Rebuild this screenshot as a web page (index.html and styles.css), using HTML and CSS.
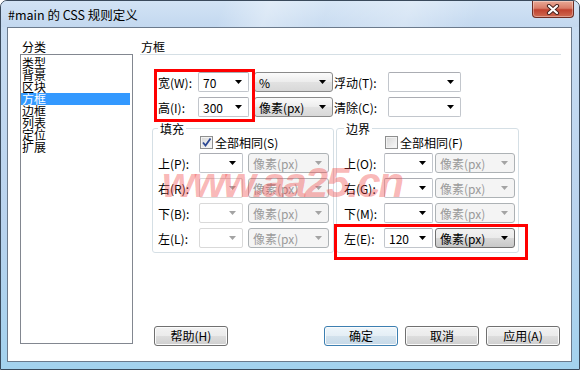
FILE: index.html
```html
<!DOCTYPE html>
<html lang="zh-CN">
<head>
    <meta charset="UTF-8">
    <title>#main 的 CSS 规则定义</title>
    <link rel="stylesheet" href="styles.css">
</head>
<body>
    <div class="window">
        <div class="titlebar">
            <span class="title">#main 的 CSS 规则定义</span>
            <span class="close">
                <svg width="16" height="11" viewBox="0 0 16 11">
                    <path d="M4 2 L12 9 M12 2 L4 9" stroke="#4a2520" stroke-width="4.2" stroke-linecap="round"/>
                    <path d="M4 2 L12 9 M12 2 L4 9" stroke="#fff" stroke-width="2.2" stroke-linecap="round"/>
                </svg>
            </span>
        </div>

        <div class="client">
            <div class="category">
                <div class="caption">分类</div>
                <ul class="list">
                    <li>类型</li>
                    <li>背景</li>
                    <li>区块</li>
                    <li class="selected">方框</li>
                    <li>边框</li>
                    <li>列表</li>
                    <li>定位</li>
                    <li>扩展</li>
                </ul>
            </div>

            <div class="panel">
                <div class="caption heading">方框</div>

                <div class="sizes">
                    <div class="row">
                        <span class="label">宽(W):</span>
                        <span class="combo num">70</span>
                        <span class="drop unit">%</span>
                        <span class="label side-label">浮动(T):</span>
                        <span class="combo pick"></span>
                    </div>
                    <div class="row">
                        <span class="label">高(I):</span>
                        <span class="combo num">300</span>
                        <span class="drop unit">像素(px)</span>
                        <span class="label side-label">清除(C):</span>
                        <span class="combo pick"></span>
                    </div>
                </div>

                <div class="groups">
                    <fieldset class="group padding">
                        <legend>填充</legend>
                        <div class="check-row">
                            <span class="check checked">
                                <svg width="11" height="11" viewBox="0 0 11 11">
                                    <path d="M2 5.5 L4.5 8.5 L9.5 1.5" fill="none" stroke="#2c4893" stroke-width="1.8"/>
                                </svg>
                            </span>
                            <span>全部相同(S)</span>
                        </div>
                        <div class="fields">
                            <div class="row">
                                <span class="label">上(P):</span>
                                <span class="combo side-num"></span>
                                <span class="drop side-unit off">像素(px)</span>
                            </div>
                            <div class="row">
                                <span class="label">右(R):</span>
                                <span class="combo side-num off"></span>
                                <span class="drop side-unit off">像素(px)</span>
                            </div>
                            <div class="row">
                                <span class="label">下(B):</span>
                                <span class="combo side-num off"></span>
                                <span class="drop side-unit off">像素(px)</span>
                            </div>
                            <div class="row">
                                <span class="label">左(L):</span>
                                <span class="combo side-num off"></span>
                                <span class="drop side-unit off">像素(px)</span>
                            </div>
                        </div>
                    </fieldset>

                    <fieldset class="group margin">
                        <legend>边界</legend>
                        <div class="check-row">
                            <span class="check"></span>
                            <span>全部相同(F)</span>
                        </div>
                        <div class="fields">
                            <div class="row">
                                <span class="label">上(O):</span>
                                <span class="combo edge-num"></span>
                                <span class="drop edge-unit off">像素(px)</span>
                            </div>
                            <div class="row">
                                <span class="label">右(G):</span>
                                <span class="combo edge-num"></span>
                                <span class="drop edge-unit off">像素(px)</span>
                            </div>
                            <div class="row">
                                <span class="label">下(M):</span>
                                <span class="combo edge-num"></span>
                                <span class="drop edge-unit off">像素(px)</span>
                            </div>
                            <div class="row">
                                <span class="label">左(E):</span>
                                <span class="combo edge-num">120</span>
                                <span class="drop edge-unit active">像素(px)</span>
                            </div>
                        </div>
                    </fieldset>
                </div>

                <div class="buttons">
                    <span class="button">帮助(H)</span>
                    <span class="button default">确定</span>
                    <span class="button">取消</span>
                    <span class="button">应用(A)</span>
                </div>
            </div>
        </div>

        <div class="watermark">www.aa25.cn</div>
        <div class="mark mark-size"></div>
        <div class="mark mark-left"></div>
    </div>
</body>
</html>
```

FILE: styles.css
```css
body {
    margin: 0;
    width: 580px;
    height: 370px;
    overflow: hidden;
    font-family: "Noto Sans CJK SC", "Liberation Sans", sans-serif;
    font-size: 12px;
    color: #000;
}
.window {
    position: relative;
    width: 580px;
    height: 370px;
    box-sizing: border-box;
    border: 1px solid #3a4a5c;
    border-radius: 7px 7px 0 0;
    background: linear-gradient(#c9ddf2 0%, #b9d3ee 60%, #a3d2ee 100%);
    display: flex;
    flex-direction: column;
    overflow: hidden;
}
.titlebar {
    height: 26px;
    flex: none;
    display: flex;
    align-items: center;
    padding-left: 7px;
    background:
        linear-gradient(110deg, rgba(255,255,255,0) 0%, rgba(255,255,255,0) 38%, rgba(255,255,255,0.35) 46%, rgba(255,255,255,0.1) 56%, rgba(255,255,255,0.3) 70%, rgba(255,255,255,0) 82%),
        linear-gradient(#d2e3f5, #c3d8ef);
}
.title {
    font-size: 12.5px;
    line-height: 16px;
    padding-top: 1px;
}
.close {
    margin-left: auto;
    margin-right: 5px;
    align-self: flex-start;
    width: 42px;
    height: 17px;
    box-sizing: border-box;
    border: 1px solid #6e2d24;
    border-top: none;
    border-radius: 0 0 4px 4px;
    background: linear-gradient(#e9a996 0%, #d97c68 45%, #c0422f 55%, #cf6a52 100%);
    box-shadow: inset 0 0 0 1px rgba(255,255,255,0.35);
    display: flex;
    align-items: center;
    justify-content: center;
}
.client {
    margin: 0 7px 7px 6px;
    height: 335px;
    flex: none;
    box-sizing: border-box;
    border: 1px solid #6b7a8c;
    background: #fff;
    display: flex;
    padding: 12px 0 0 12px;
}
.category {
    width: 113px;
    flex: none;
}
.caption {
    height: 14px;
    line-height: 14px;
    padding-left: 2px;
}
.list {
    margin: 0;
    padding: 2px 2px 0 0;
    list-style: none;
    height: 290px;
    box-sizing: border-box;
    border: 1px solid #828790;
}
.list li {
    height: 12px;
    line-height: 12px;
    padding-left: 1px;
}
.list .selected {
    background: #3399ff;
    color: #fff;
}
.panel {
    width: 421px;
    margin-left: 7px;
    display: flex;
    flex-direction: column;
}
.heading {
    padding-left: 1px;
    border-bottom: 1px solid #d5dfe5;
}
.sizes {
    margin-top: 17px;
    padding-left: 18px;
    display: flex;
    flex-direction: column;
    gap: 5px;
}
.row {
    display: flex;
    align-items: center;
    height: 20px;
}
.label {
    width: 40px;
    flex: none;
    white-space: nowrap;
}
.side-label {
    width: 54px;
    margin-left: 1px;
}
.combo,
.drop {
    height: 20px;
    box-sizing: border-box;
    flex: none;
    display: flex;
    align-items: center;
    padding-left: 4px;
    white-space: nowrap;
}
.combo::after,
.drop::after {
    content: "";
    width: 7px;
    height: 4px;
    margin-left: auto;
    margin-right: 6px;
    background: #000;
    clip-path: polygon(0 0, 100% 0, 50% 100%);
}
.combo {
    border: 1px solid #c2c6cc;
    border-top-color: #abadb3;
    border-radius: 2px;
    background: #fff;
}
.drop {
    border: 1px solid #8a8a8a;
    border-radius: 3px;
    background: linear-gradient(#fbfbfb, #ececec 50%, #e2e2e2 51%, #d8d8d8);
}
.drop.active {
    border-color: #707070;
    background: linear-gradient(#f2f2f2, #ebebeb 50%, #d8d8d8 51%, #c8c8c8);
}
.combo.off {
    border-color: #d9d9d9;
}
.combo.off::after,
.drop.off::after {
    background: #a3a3a3;
}
.drop.off {
    border-color: #adb2b5;
    background: #f4f4f4;
    color: #9a9a9a;
}
.num { width: 51px; margin-right: 5px; }
.unit { width: 79px; }
.pick { width: 73px; }
.side-num { width: 44px; margin-right: 5px; }
.side-unit { width: 81px; }
.edge-num { width: 49px; margin-right: 2px; }
.edge-unit { width: 80px; }
.groups {
    display: flex;
    gap: 2px;
    margin-top: 5px;
    padding-left: 12px;
}
.group {
    margin: 0;
    min-width: 0;
    box-sizing: border-box;
    border: 1px solid #d5dfe5;
    border-radius: 3px;
    padding: 1px 0 4px 5px;
}
.group legend {
    padding: 0 2px;
    line-height: 13px;
}
.padding {
    width: 182px;
}
.margin {
    width: 183px;
    padding-left: 7px;
}
.margin .label {
    width: 40px;
}
.padding .label {
    width: 41px;
}
.check-row {
    display: flex;
    align-items: center;
    gap: 2px;
    height: 13px;
    line-height: 13px;
}
.padding .check-row {
    padding-left: 42px;
}
.margin .check-row {
    padding-left: 41px;
}
.check {
    width: 13px;
    height: 13px;
    box-sizing: border-box;
    border: 1px solid #8e8f8f;
    background: linear-gradient(135deg, #d6d6d6, #fafafa);
    box-shadow: inset 0 0 0 1px #f2f2f2;
    display: flex;
    align-items: center;
    justify-content: center;
}
.fields {
    margin-top: 4px;
    display: flex;
    flex-direction: column;
    gap: 5px;
}
.buttons {
    margin-top: auto;
    margin-bottom: 15px;
    padding-left: 14px;
    display: flex;
    gap: 7px;
}
.button {
    width: 74px;
    height: 20px;
    box-sizing: border-box;
    border: 1px solid #707070;
    border-radius: 3px;
    background: linear-gradient(#f2f2f2, #ebebeb 50%, #dddddd 51%, #cfcfcf);
    box-shadow: inset 0 0 0 1px #fbfbfb;
    display: flex;
    align-items: center;
    justify-content: center;
    line-height: 18px;
}
.button.default {
    margin-left: 89px;
    border-color: #3c7fb1;
    background: linear-gradient(#eef6fb, #e4eef5 50%, #d3e2ed 51%, #c6d9e8);
}
.watermark {
    position: absolute;
    left: 161px;
    top: 161px;
    font-family: "Liberation Sans", sans-serif;
    font-size: 42px;
    font-weight: bold;
    font-style: italic;
    line-height: 1;
    letter-spacing: -2px;
    color: rgba(240, 70, 70, 0.4);
    pointer-events: none;
}
.mark {
    position: absolute;
    box-sizing: border-box;
    border: 3px solid #ff0000;
}
.mark-size {
    left: 153px;
    top: 68px;
    width: 101px;
    height: 53px;
}
.mark-left {
    left: 333px;
    top: 223px;
    width: 194px;
    height: 36px;
}
```
